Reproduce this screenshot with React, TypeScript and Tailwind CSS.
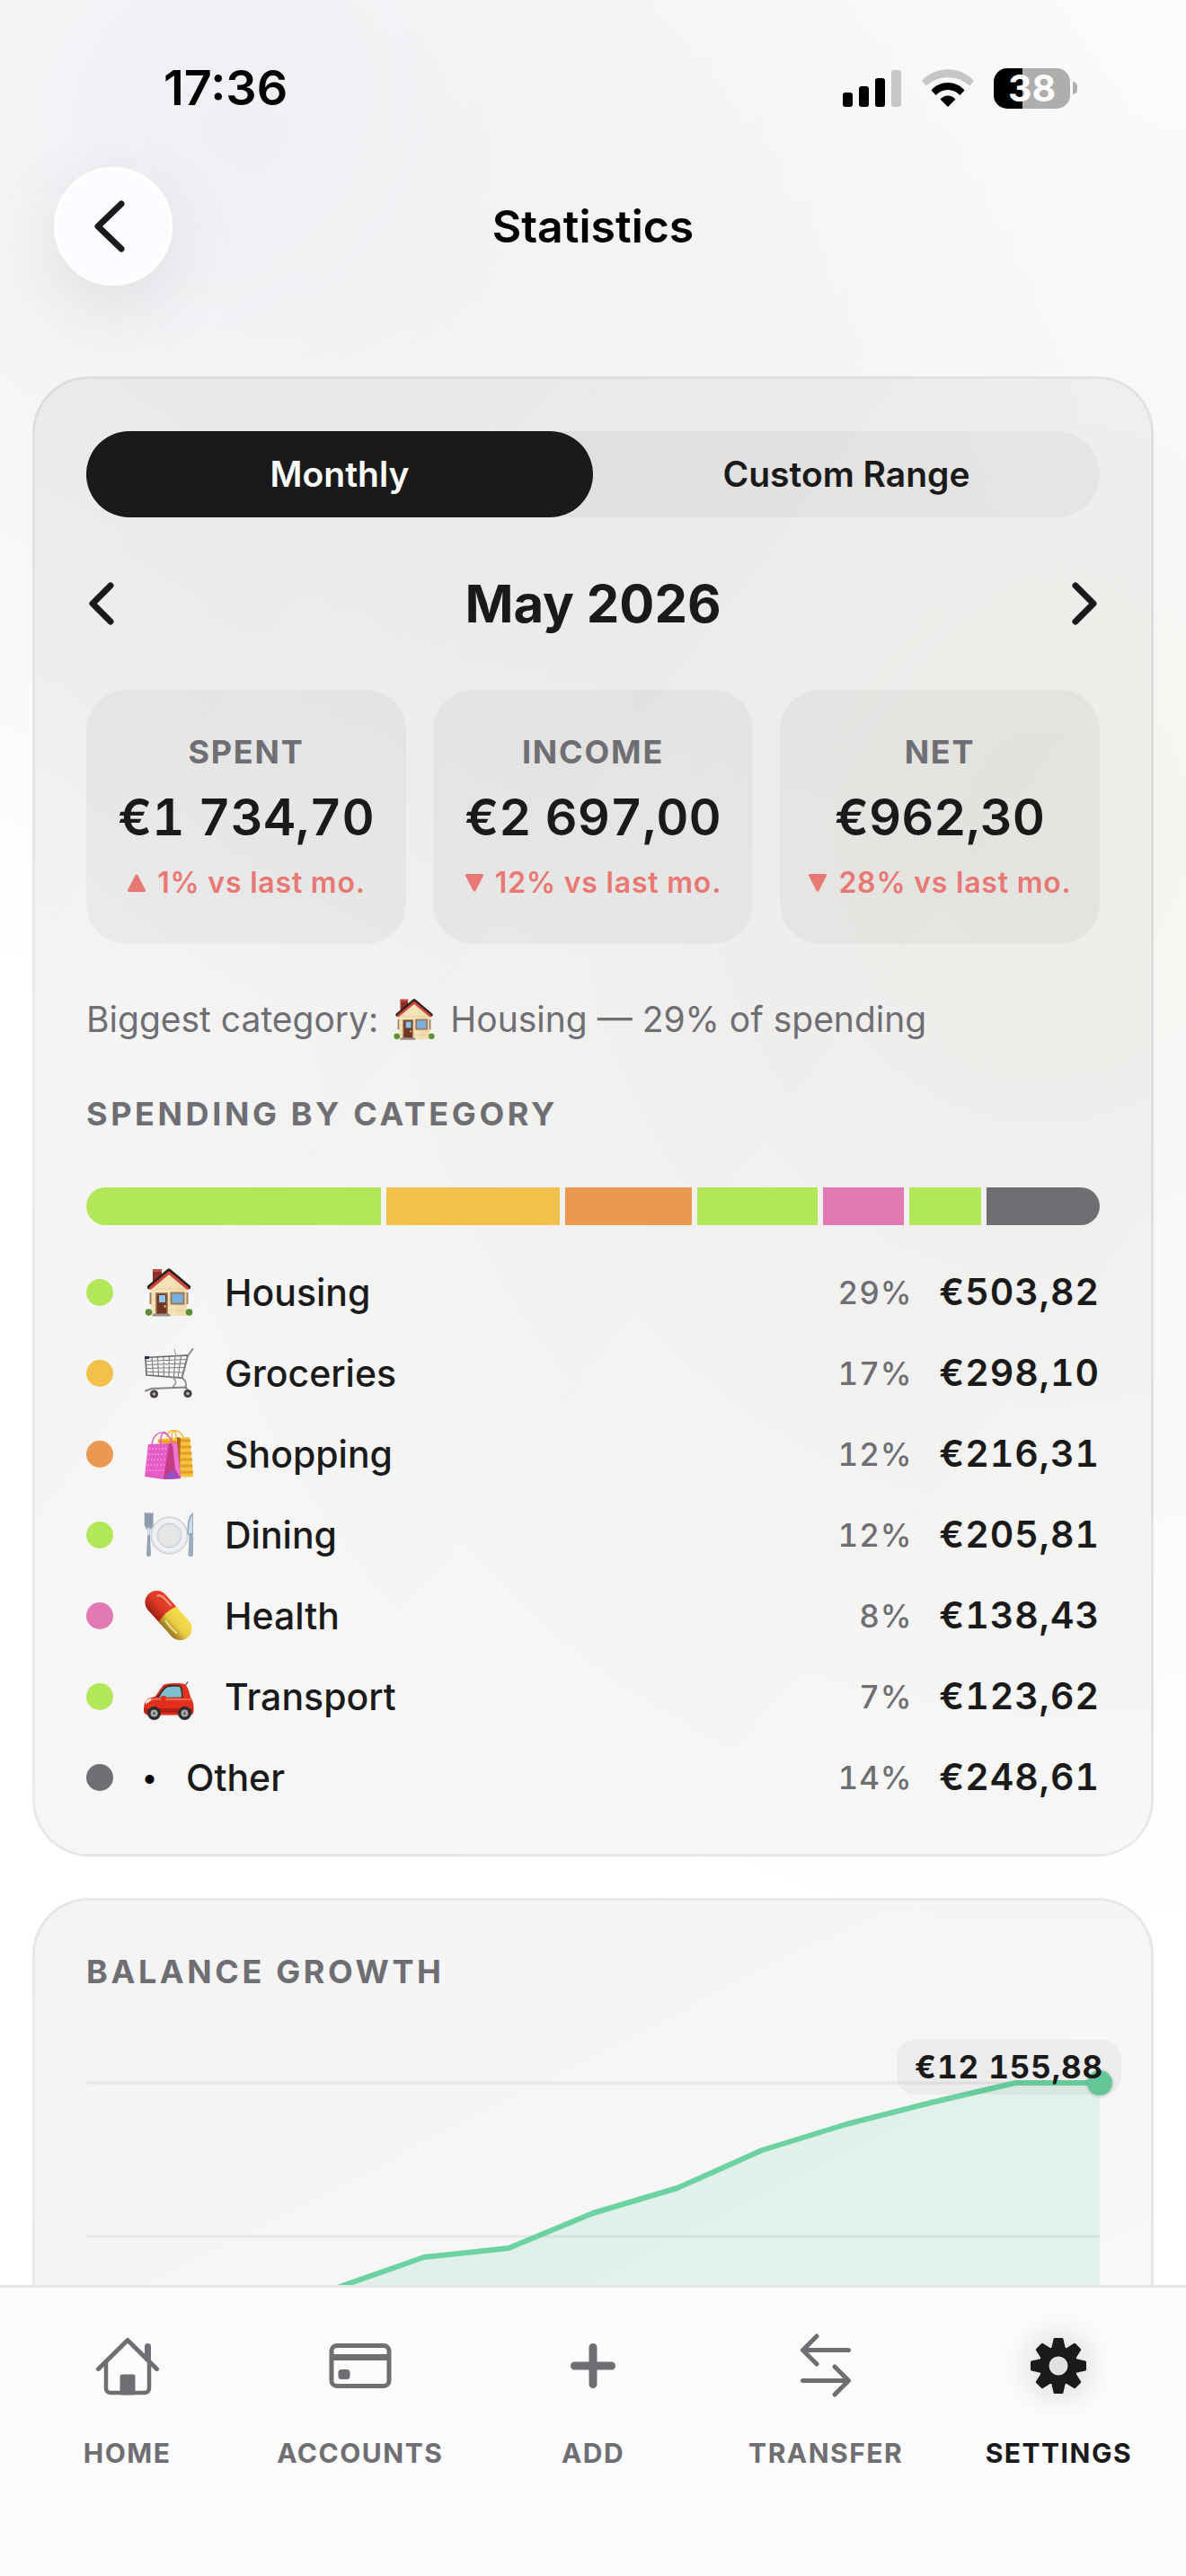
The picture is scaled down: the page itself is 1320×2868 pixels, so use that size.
import React from "react";
import clsx from "clsx";

type Category = {
  name: string;
  icon: React.ReactNode;
  share: string;
  amount: string;
  weight: number;
  color: string;
};

const HouseEmoji = ({ className }: { className?: string }) => (
  <svg viewBox="0 0 56 56" className={className} aria-hidden="true">
    <rect x="10" y="2" width="10" height="18" fill="#8e2f29" />
    <rect x="10" y="2" width="10" height="3" fill="#c14a40" />
    <path d="M8 23 28 5l20 18v31H8Z" fill="#f4e2b8" />
    <path d="M28 5l20 18v31H36V20Z" fill="#ecd6a6" opacity=".5" />
    <path d="M12 24h33M10 30h37M10 36h37M10 42h37M10 48h37" stroke="#dcc692" strokeWidth=".7" />
    <path d="M6 22 28 3.500 50 22" fill="none" stroke="#2b2220" strokeWidth="4.500" strokeLinejoin="round" strokeLinecap="round" />
    <path d="M6.500 24 28 6 49.500 24" fill="none" stroke="#d2453a" strokeWidth="3" strokeLinejoin="round" />
    <rect x="13" y="28" width="14" height="25" fill="#a98563" />
    <rect x="14.500" y="29.500" width="11" height="23.500" fill="#6f3623" />
    <rect x="17" y="31" width="7" height="8" fill="#8ec3f0" />
    <circle cx="23.500" cy="43.500" r="1.200" fill="#f0c34a" />
    <rect x="6.500" y="28" width="2" height="13" fill="#9b8064" />
    <rect x="47.500" y="28" width="2" height="13" fill="#9b8064" />
    <rect x="29.500" y="27.500" width="16" height="14" fill="#9b7a58" />
    <rect x="31.500" y="29.500" width="12" height="10" fill="#78aee0" />
    <circle cx="5.500" cy="50" r="3.800" fill="#5d8f35" />
    <circle cx="50.500" cy="50" r="3.800" fill="#5d8f35" />
    <path d="M10.500 51.500h18l1.500 3H9.500Z" fill="#9a9086" />
  </svg>
);

const CartEmoji = () => (
  <svg viewBox="0 0 56 56" className="h-14 w-14" fill="none" aria-hidden="true">
    <path d="M2 10.500 49 8l-6.500 25L3 30Z" stroke="#6b6b6b" strokeWidth="1.700" />
    <path d="M2 14.500 48 12.500M2.500 18.500 47 17M2.500 22.500 46 21.500M3 26.500 45 27M9 10l1.500 20.500M15.500 10l1 21M22 9.500l.5 22M28.500 9l-.5 23M35 9l-1.500 23M41.500 8.500 38 33" stroke="#7d7d7d" strokeWidth="1.100" />
    <path d="M34 1l2 8" stroke="#a5a5a5" strokeWidth="1.200" />
    <path d="M54.500 1 49 8.500 42.500 33c6 4 5 8 3.500 11.500" stroke="#858585" strokeWidth="1.800" strokeLinecap="round" />
    <path d="M31 32c6 4 6 8 1 11" stroke="#9b9b9b" strokeWidth="1.600" />
    <path d="M2 47.500 9 45l38-1.500 2 4" stroke="#858585" strokeWidth="2" strokeLinecap="round" />
    <rect x="1" y="9" width="5" height="3" fill="#1f3448" />
    <circle cx="11.500" cy="51" r="4.600" fill="#453f3f" />
    <circle cx="11.500" cy="51" r="1.800" fill="#b9b5b3" />
    <circle cx="49" cy="50.500" r="4.600" fill="#453f3f" />
    <circle cx="49" cy="50.500" r="1.800" fill="#b9b5b3" />
  </svg>
);

const BagsEmoji = () => (
  <svg viewBox="0 0 56 56" className="h-14 w-14" fill="none" aria-hidden="true">
    <path d="M15.500 11 51 9l4 44-22 1Z" fill="#f3c53c" />
    <path d="M41 13h11M41 20h12M41 27h12.500M41 34h13M41 41h13.500M41 48h14" stroke="#e59a2c" strokeWidth="3" />
    <path d="M16 14h20M16 19h20" stroke="#e59a2c" strokeWidth="2.500" />
    <path d="m37 9 4 1-1 43h-4Z" fill="#b5641e" />
    <path d="M26 9c1-10 13-10 18 0M31 12c0-12 5-13 5-2" stroke="#eeb52e" strokeWidth="1.500" />
    <path d="M5 17 37 15.500 41 55 22 56 1 53Z" fill="#e65bc5" />
    <path d="m28 16-6 40 19-1-4-39.500Z" fill="#c43b86" />
    <path d="m37 15.500 4 39.500-6-10-3-29Z" fill="#ee76d2" />
    <path d="m31 45 10 10-19 1Z" fill="#9a4fc4" />
    <path d="M6 22h20M5 28h20M4.500 34h20M4 40h19M3 46h19" stroke="#f6a6e4" strokeWidth="1.300" strokeDasharray="1.500 2" />
    <path d="M9 20C9-1 30-1 32 19M19 19c-1-16 4-18 7-13" stroke="#dc62b8" strokeWidth="1.500" />
  </svg>
);

const PlateEmoji = () => (
  <svg viewBox="0 0 56 56" className="h-14 w-14" fill="none" aria-hidden="true">
    <circle cx="28.500" cy="28.500" r="20.500" fill="#e3e5e8" stroke="#bfc2c6" strokeWidth=".9" />
    <circle cx="28.500" cy="28" r="18.500" fill="#eff0f1" />
    <circle cx="28.500" cy="28.500" r="13.500" fill="#dfe2e7" stroke="#bcc5d2" strokeWidth=".9" />
    <circle cx="28.500" cy="28.500" r="11" fill="#e7e7e6" />
    <path d="M1.500 4v13c0 5 3 4 3 7L3 50c0 2.500 5 2.500 5 0L6.800 24c0-3 3.200-2 3.200-7V4" fill="#93a3b4" />
    <path d="M1.500 3v15M4.300 3v15M7.100 3v15M9.800 3v15" stroke="#8996a4" strokeWidth="1.400" />
    <path d="M4 20h3l-.5 8h-2Z" fill="#cfe0f2" />
    <path d="M55 3c-5 2-7 12-6.500 24l2 2L49.500 50c0 3 5.500 3 5.500 0Z" fill="#9dacbc" />
    <path d="M54 6c-3 4-4 12-4 20h4Z" fill="#cbdcee" />
  </svg>
);

const PillEmoji = () => (
  <svg viewBox="0 0 56 56" className="h-14 w-14" aria-hidden="true">
    <defs>
      <linearGradient id="pillRed" x1="0" y1="0" x2="0" y2="1">
        <stop offset="0" stopColor="#e8402a" />
        <stop offset=".5" stopColor="#dd3a26" />
        <stop offset="1" stopColor="#9e2114" />
      </linearGradient>
      <linearGradient id="pillYellow" x1="0" y1="0" x2="0" y2="1">
        <stop offset="0" stopColor="#f5e04c" />
        <stop offset=".55" stopColor="#e8cd45" />
        <stop offset="1" stopColor="#95711f" />
      </linearGradient>
    </defs>
    <g transform="rotate(48 27.500 27.500)">
      <path d="M29 14.500H8a13 13 0 0 0 0 26h21Z" fill="url(#pillRed)" />
      <path d="M26 14.500h21a13 13 0 0 1 0 26H26c-3-8-3-18 0-26Z" fill="url(#pillYellow)" />
      <path d="M3 22c2-4 5-4 18-4" fill="none" stroke="#ff9c84" strokeWidth="2" strokeLinecap="round" />
      <path d="M30 34c6 1 12 1 18 0" fill="none" stroke="#f8efa0" strokeWidth="1.500" strokeLinecap="round" />
    </g>
  </svg>
);

const CarEmoji = () => (
  <svg viewBox="0 0 56 56" className="h-14 w-14" aria-hidden="true">
    <path d="m46 16 3-4.500" stroke="#444" strokeWidth="1.200" />
    <path d="M0 44c0-9 1-14 12-16 3-2 6-9 10-13 2-2 20-3 24-.5 3 2 5 10 6 14 3 4 4 10 3.500 16-.5 3-2 4-5 4H7C3 49 0 47 0 44Z" fill="#e2301f" />
    <path d="M14 29c4-5 7-11 11-13 3-1.500 13-1.500 16-.5 2 3 2.500 8 2.500 13.500Z" fill="#3a2b2c" />
    <path d="M17 29c3-5 5-9 9-11.500 4-1 10-1 14-.5 1.500 3 2 7 2 11.500Z" fill="#7fbfce" />
    <path d="M2 36c4-5 12-6 20-5h31" fill="none" stroke="#ff7a63" strokeWidth="1.500" />
    <path d="M0 41h54.500v5H1Z" fill="#b61f16" />
    <rect x="19" y="27" width="6" height="5" rx="2" fill="#e2301f" />
    <path d="M2 34c1-3 4-4 7-4-1 3-4 5-7 6Z" fill="#f8e6df" />
    <circle cx="11.500" cy="46.500" r="7.500" fill="#2c2c2e" />
    <circle cx="11.500" cy="46.500" r="4" fill="#a9a9ab" />
    <circle cx="11.500" cy="46.500" r="1.500" fill="#58585a" />
    <circle cx="45.500" cy="46.500" r="7.500" fill="#2c2c2e" />
    <circle cx="45.500" cy="46.500" r="4" fill="#a9a9ab" />
    <circle cx="45.500" cy="46.500" r="1.500" fill="#58585a" />
  </svg>
);

const categories: Category[] = [
  { name: "Housing", icon: <HouseEmoji className="h-14 w-14" />, share: "29%", amount: "€503,82", weight: 328, color: "bg-[#b2e759]" },
  { name: "Groceries", icon: <CartEmoji />, share: "17%", amount: "€298,10", weight: 193, color: "bg-[#f2c14b]" },
  { name: "Shopping", icon: <BagsEmoji />, share: "12%", amount: "€216,31", weight: 141, color: "bg-[#eb9850]" },
  { name: "Dining", icon: <PlateEmoji />, share: "12%", amount: "€205,81", weight: 134, color: "bg-[#b2e759]" },
  { name: "Health", icon: <PillEmoji />, share: "8%", amount: "€138,43", weight: 90, color: "bg-[#e279b2]" },
  { name: "Transport", icon: <CarEmoji />, share: "7%", amount: "€123,62", weight: 80, color: "bg-[#b2e759]" },
  { name: "Other", icon: null, share: "14%", amount: "€248,61", weight: 126, color: "bg-[#6e6e73]" },
];

const stats = [
  { label: "SPENT", value: "€1 734,70", delta: "1% vs last mo.", up: true },
  { label: "INCOME", value: "€2 697,00", delta: "12% vs last mo.", up: false },
  { label: "NET", value: "€962,30", delta: "28% vs last mo.", up: false },
];

// running balance, one point per month
const points = "0,300 94,292 188,268 282,227 376,194 470,184 564,145 658,117 752,75 846,46 940,22 1034,0 1128,0";

const Chevron = ({ right, className }: { right?: boolean; className?: string }) => (
  <svg viewBox="0 0 30 50" className={className} fill="none" stroke="currentColor" strokeWidth="7" strokeLinecap="round" strokeLinejoin="round" aria-hidden="true">
    <path d={right ? "M5 5l20 20L5 45" : "M25 5 5 25l20 20"} />
  </svg>
);

const StatusBar = () => (
  <div className="flex items-center justify-between pt-[66px] pr-[121px] pb-14 pl-[182px] text-black">
    <span className="text-[54px] leading-[64px] font-semibold">17:36</span>
    <div className="flex items-center gap-[22px]">
      <svg viewBox="0 0 66 42" className="h-[42px] w-[66px]" aria-hidden="true">
        <rect x="0" y="26" width="11" height="16" rx="3" />
        <rect x="18" y="19" width="11" height="23" rx="3" />
        <rect x="36" y="10" width="11" height="32" rx="3" />
        <rect x="54" y="1" width="11" height="41" rx="3" fill="#c6c6c6" />
      </svg>
      <svg viewBox="0 0 58 42" className="h-[42px] w-[58px]" aria-hidden="true">
        <path d="M0 13C15-4 43-4 58 13l-5 5.500C40 6 18 6 5 18.500Z" fill="#c6c6c6" />
        <path d="M10.500 23.500C20 12 38 12 47.500 23.500L42.500 29C35 21 23 21 15.500 29Z" />
        <path d="M20.500 33.500c5-5.500 12-5.500 17 0L29 42Z" />
      </svg>
      <div className="flex items-center gap-[3px]">
        <div className="flex h-[45px] w-[85px] items-center justify-center rounded-[15px] bg-linear-to-r from-black from-38% to-[#aeaeac] to-38% text-[41px] leading-[45px] font-bold text-white">
          38
        </div>
        <div className="h-[14px] w-[5px] rounded-r-full bg-[#aeaeac]" />
      </div>
    </div>
  </div>
);

const Header = () => (
  <header className="mb-[101px] grid grid-cols-[132px_1fr_132px] items-center px-[60px]">
    <button
      type="button"
      aria-label="Back"
      className="flex h-[132px] w-[132px] items-center justify-center rounded-full border-[3px] border-white bg-[#fbfcff] pr-5 text-[#1a1a1c] shadow-[0_24px_84px_rgba(0,0,0,0.09)]"
    >
      <svg viewBox="0 0 34 58" className="ml-3 h-[58px] w-[34px]" fill="none" stroke="currentColor" strokeWidth="7" strokeLinecap="round" strokeLinejoin="round" aria-hidden="true">
        <path d="M30 4 4 29l26 25" />
      </svg>
    </button>
    <h1 className="text-center text-[50px] leading-[64px] font-semibold text-black">Statistics</h1>
  </header>
);

const StatCard = ({ label, value, delta, up }: (typeof stats)[number]) => (
  <div className="flex flex-col items-center gap-4 rounded-[45px] bg-black/[0.035] pt-12 pb-[47px] whitespace-nowrap">
    <div className="text-[36px] leading-[43px] font-bold tracking-wider text-[#6e6e73]">{label}</div>
    <div className="text-[56px] leading-[71px] font-semibold tabular-nums">{value}</div>
    <div className="flex items-center gap-3 text-[32px] leading-[42px] font-semibold tracking-wide text-[#e87873]">
      <svg viewBox="0 0 22 22" className="h-[22px] w-[22px]" fill="currentColor" stroke="currentColor" strokeWidth="3" strokeLinejoin="round" aria-hidden="true">
        <path d={up ? "M11 3 2.500 19.500h17Z" : "M11 19 2.500 2.500h17Z"} />
      </svg>
      {delta}
    </div>
  </div>
);

const SectionTitle = ({ children }: { children: React.ReactNode }) => (
  <h2 className="text-[36px] leading-[43px] font-bold tracking-widest text-[#6e6e73]">{children}</h2>
);

const BalanceChart = () => (
  <div className="relative h-[420px]">
    <svg viewBox="0 -42 1128 420" preserveAspectRatio="none" className="h-full w-full overflow-visible" aria-hidden="true">
      <path d="M0 0H1128M0 171H1128M0 342H1128" stroke="#e6e6e6" strokeWidth="3" />
      <polygon points={`${points} 1128,342 0,342`} fill="#6ad0aa" opacity=".15" />
      <polyline points={points} fill="none" stroke="#6bd2a0" strokeWidth="6" strokeLinejoin="round" />
    </svg>
    <div className="absolute top-[28px] -right-[14px] h-7 w-7 rounded-full bg-[#6ad09f] shadow-[0_1px_4px_rgba(0,0,0,0.2)]" />
    <div className="absolute -top-[6px] -right-6 rounded-[20px] bg-black/[0.04] px-5 py-2 text-[35px] leading-[45px] font-bold tracking-wide whitespace-nowrap tabular-nums">
      €12 155,88
    </div>
  </div>
);

const HomeIcon = () => (
  <svg viewBox="0 0 72 72" className="h-[72px] w-[72px]" fill="none" stroke="currentColor" strokeWidth="5" strokeLinecap="round" strokeLinejoin="round" aria-hidden="true">
    <path d="M3.500 39.500 36 7.500l32.500 32" />
    <path d="M58.500 28V14.500" strokeWidth="7" />
    <path d="M12 33v28a5 5 0 0 0 5 5h38a5 5 0 0 0 5-5V33" strokeWidth="4.500" />
    <path d="M30 48h12v18H30Z" fill="currentColor" />
  </svg>
);

const CardIcon = () => (
  <svg viewBox="0 0 72 72" className="h-[72px] w-[72px]" fill="none" stroke="currentColor" strokeWidth="5" aria-hidden="true">
    <rect x="4" y="13.500" width="64" height="45" rx="6" />
    <path d="M4 26.500h64" strokeWidth="7" />
    <rect x="11.500" y="40" width="13" height="11" rx="3.500" fill="currentColor" stroke="none" />
  </svg>
);

const AddIcon = () => (
  <svg viewBox="0 0 72 72" className="h-[72px] w-[72px]" fill="none" stroke="currentColor" strokeWidth="9" strokeLinecap="round" aria-hidden="true">
    <path d="M36 15.500v41M15.500 36h41" />
  </svg>
);

const TransferIcon = () => (
  <svg viewBox="0 0 72 72" className="h-[72px] w-[72px]" fill="none" stroke="currentColor" strokeWidth="5" strokeLinecap="round" strokeLinejoin="round" aria-hidden="true">
    <path d="M61.500 18.500H10.500M26 3 10.500 18.500 26 34" />
    <path d="M10.500 52.500h51M46 37l15.500 15.500L46 68" />
  </svg>
);

const GearIcon = () => (
  <svg viewBox="0 0 72 72" className="h-[72px] w-[72px] overflow-visible drop-shadow-[0_0_20px_rgba(0,0,0,0.2)]" fill="currentColor" aria-hidden="true">
    <g stroke="currentColor" strokeWidth="3" strokeLinejoin="round">
      {[0, 45, 90, 135, 180, 225, 270, 315].map((angle) => (
        <path key={angle} d="m32 6.500-2.500 11h13L40 6.500Z" transform={`rotate(${angle} 36 36)`} />
      ))}
    </g>
    <circle cx="36" cy="36" r="16" fill="#e0e1e3" stroke="currentColor" strokeWidth="11" />
  </svg>
);

const tabs = [
  { label: "HOME", icon: <HomeIcon /> },
  { label: "ACCOUNTS", icon: <CardIcon /> },
  { label: "ADD", icon: <AddIcon /> },
  { label: "TRANSFER", icon: <TransferIcon /> },
  { label: "SETTINGS", icon: <GearIcon />, active: true },
];

const TabBar = () => (
  <nav className="grid shrink-0 grid-cols-5 border-t-[3px] border-[#e6e6e6] bg-[#fcfcfc] px-3 pt-[51px] pb-[116px]">
    {tabs.map((tab) => (
      <a
        key={tab.label}
        href={`#${tab.label.toLowerCase()}`}
        className={clsx(
          "flex flex-col items-center gap-10 text-[30px] leading-[42px] font-bold tracking-wider",
          tab.active ? "text-[#1a1a1a]" : "text-[#6e6e73]",
        )}
      >
        {tab.icon}
        {tab.label}
      </a>
    ))}
  </nav>
);

const cardStyle = "mx-9 rounded-[63px] border-[3px] border-black/[0.06] bg-linear-to-br from-black/[0.045] to-black/[0.025] px-[57px] pt-[58px]";

export default function App() {
  return (
    <div className="flex h-screen flex-col bg-white bg-[radial-gradient(ellipse_1000px_1000px_at_20%_5%,rgba(216,218,226,0.42),rgba(255,255,255,0)),radial-gradient(ellipse_1100px_1300px_at_88%_32%,rgba(230,228,221,0.42),rgba(255,255,255,0))] font-['Inter','Liberation_Sans',sans-serif] text-[#1a1a1a]">
      <div className="min-h-0 flex-1 overflow-y-auto [scrollbar-width:none]">
        <StatusBar />
        <Header />

        <main className="flex flex-col gap-[46px] pb-12">
          <section className={clsx(cardStyle, "flex flex-col gap-[60px] pb-[55px]")}>
            {/* Period switch */}
            <div className="grid grid-cols-2 rounded-full bg-black/[0.035] text-[39px] leading-[48px] font-semibold">
              <button type="button" className="rounded-full bg-[#1a1a1a] py-6 text-white">
                Monthly
              </button>
              <button type="button" className="py-6">
                Custom Range
              </button>
            </div>

            <div className="flex items-center justify-between px-[2px]">
              <button type="button" aria-label="Previous month">
                <Chevron className="h-[50px] w-[30px]" />
              </button>
              <h2 className="text-[58px] leading-[72px] font-bold">May 2026</h2>
              <button type="button" aria-label="Next month">
                <Chevron right className="h-[50px] w-[30px]" />
              </button>
            </div>

            <div className="grid grid-cols-3 gap-[30px]">
              {stats.map((stat) => (
                <StatCard key={stat.label} {...stat} />
              ))}
            </div>

            <p className="flex items-center gap-4 text-[39px] leading-[48px] text-[#6e6e73]">
              Biggest category:
              <HouseEmoji className="h-12 w-12" />
              Housing — 29% of spending
            </p>

            <SectionTitle>SPENDING BY CATEGORY</SectionTitle>

            <div className="flex flex-col gap-[45px]">
              <div className="flex h-[42px] gap-[6px] overflow-hidden rounded-full">
                {categories.map((c) => (
                  <div key={c.name} className={clsx("basis-0", c.color)} style={{ flexGrow: c.weight }} />
                ))}
              </div>

              <ul className="flex flex-col gap-[30px]">
                {categories.map((c) => (
                  <li key={c.name} className="flex h-[60px] items-center gap-[30px]">
                    <span className={clsx("h-[30px] w-[30px] rounded-full", c.color)} />
                    {c.icon ? (
                      <span className="flex w-16 justify-center">{c.icon}</span>
                    ) : (
                      <span className="w-[21px] text-center text-[32px] text-black">•</span>
                    )}
                    <span className="flex-1 text-[41px] leading-[60px] font-medium">{c.name}</span>
                    <span className="text-[35px] font-medium tracking-wide text-[#6e6e73] tabular-nums">{c.share}</span>
                    <span className="text-[41px] font-semibold tracking-wide tabular-nums">{c.amount}</span>
                  </li>
                ))}
              </ul>
            </div>
          </section>

          <section className={clsx(cardStyle, "flex flex-col gap-[60px] pb-[55px]")}>
            <SectionTitle>BALANCE GROWTH</SectionTitle>
            <BalanceChart />
          </section>
        </main>
      </div>

      <TabBar />
    </div>
  );
}
